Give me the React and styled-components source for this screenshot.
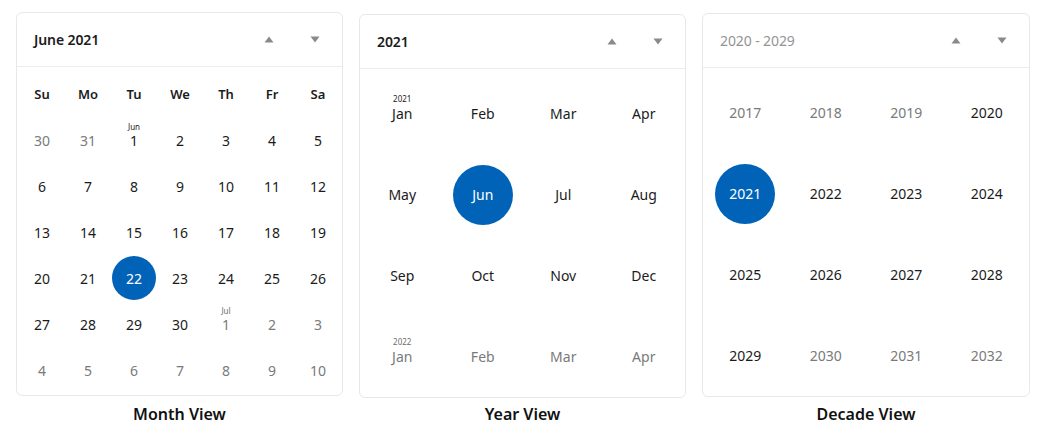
import React from "react";
import styled, { createGlobalStyle } from "styled-components";

const Global = createGlobalStyle`
  html, body { margin: 0; padding: 0; background: #ffffff; }
  body { font-family: "Noto Sans", "Open Sans", sans-serif; color: #1b1b1b; }
`;

const Page = styled.div`
  display: flex;
  gap: 16px;
  padding: 12px 16px 0 16px;
  align-items: flex-start;
`;

const Column = styled.div`
  display: flex;
  flex-direction: column;
  align-items: center;
  width: ${(p) => p.$w}px;
`;

const Card = styled.div`
  box-sizing: border-box;
  width: 100%;
  height: 384px;
  margin-top: ${(p) => p.$top || 0}px;
  border: 1px solid #e8e8e8;
  border-radius: 6px;
  background: #fff;
  display: flex;
  flex-direction: column;
  overflow: hidden;
`;

const Header = styled.div`
  height: 53px;
  flex: none;
  display: flex;
  align-items: center;
  padding: 0 4px 0 17px;
  border-bottom: 1px solid #ececec;
`;

const Title = styled.div`
  flex: 1;
  font-size: 14px;
  font-weight: ${(p) => (p.$muted ? 400 : 600)};
  color: ${(p) => (p.$muted ? "#949494" : "#1b1b1b")};
  letter-spacing: -0.1px;
`;

const NavButton = styled.div`
  width: 46px;
  height: 40px;
  display: flex;
  align-items: center;
  justify-content: center;
`;

const Caption = styled.div`
  margin-top: ${(p) => p.$gap}px;
  font-size: 16px;
  font-weight: 600;
  color: #111;
  letter-spacing: 0px;
  line-height: 22px;
`;

const DayGrid = styled.div`
  display: grid;
  grid-template-columns: repeat(7, 46px);
  grid-auto-rows: 46px;
  padding: 4px 2px 0 2px;
`;

const WeekDay = styled.div`
  display: flex;
  align-items: center;
  justify-content: center;
  font-size: 13px;
  font-weight: 600;
  color: #1b1b1b;
`;

const Cell = styled.div`
  position: relative;
  display: flex;
  align-items: center;
  justify-content: center;
`;

const Bubble = styled.div`
  width: ${(p) => p.$size}px;
  height: ${(p) => p.$size}px;
  border-radius: 50%;
  display: flex;
  align-items: center;
  justify-content: center;
  font-size: 14px;
  background: ${(p) => (p.$selected ? "#0063b8" : "transparent")};
  color: ${(p) => (p.$selected ? "#ffffff" : p.$out ? "#7a7a7a" : "#1b1b1b")};
`;

const Tag = styled.div`
  position: absolute;
  left: 0;
  right: 0;
  top: ${(p) => p.$top}px;
  text-align: center;
  font-size: 8px;
  line-height: 10px;
  color: ${(p) => (p.$out ? "#6e6e6e" : "#1b1b1b")};
`;

const BigGrid = styled.div`
  display: grid;
  grid-template-columns: repeat(4, 80.5px);
  grid-auto-rows: 81px;
  padding: 4px 2px 0 2px;
`;

const Arrow = ({ down }) => (
  <svg width="10" height="7" viewBox="0 0 10 7">
    <polygon points={down ? "0.5,0.5 9.5,0.5 5,6.5" : "0.5,6.5 9.5,6.5 5,0.5"} fill="#8a8a8a" />
  </svg>
);

const Nav = () => (
  <>
    <NavButton>
      <Arrow />
    </NavButton>
    <NavButton>
      <Arrow down />
    </NavButton>
  </>
);

const weekDays = ["Su", "Mo", "Tu", "We", "Th", "Fr", "Sa"];

const buildDays = () => {
  const days = [];
  [30, 31].forEach((d) => days.push({ d, out: true }));
  for (let d = 1; d <= 30; d++) days.push({ d, out: false, tag: d === 1 ? "Jun" : null, sel: d === 22 });
  for (let d = 1; d <= 10; d++) days.push({ d, out: true, tag: d === 1 ? "Jul" : null });
  return days;
};

const months = ["Jan", "Feb", "Mar", "Apr", "May", "Jun", "Jul", "Aug", "Sep", "Oct", "Nov", "Dec"];

const MonthView = () => (
  <Column $w={327}>
    <Card $top={0}>
      <Header>
        <Title>June 2021</Title>
        <Nav />
      </Header>
      <DayGrid>
        {weekDays.map((w) => (
          <WeekDay key={w}>{w}</WeekDay>
        ))}
        {buildDays().map((c, i) => (
          <Cell key={i}>
            {c.tag && <Tag $top={5} $out={c.out}>{c.tag}</Tag>}
            <Bubble $size={44} $selected={c.sel} $out={c.out}>
              {c.d}
            </Bubble>
          </Cell>
        ))}
      </DayGrid>
    </Card>
    <Caption $gap={7}>Month View</Caption>
  </Column>
);

const YearView = () => {
  const items = [
    ...months.map((m, i) => ({ t: m, out: false, tag: i === 0 ? "2021" : null, sel: m === "Jun" })),
    ...months.slice(0, 4).map((m, i) => ({ t: m, out: true, tag: i === 0 ? "2022" : null })),
  ];
  return (
    <Column $w={327}>
      <Card $top={2}>
        <Header>
          <Title>2021</Title>
          <Nav />
        </Header>
        <BigGrid>
          {items.map((c, i) => (
            <Cell key={i}>
              {c.tag && <Tag $top={21} $out={c.out}>{c.tag}</Tag>}
              <Bubble $size={60} $selected={c.sel} $out={c.out}>
                {c.t}
              </Bubble>
            </Cell>
          ))}
        </BigGrid>
      </Card>
      <Caption $gap={5}>Year View</Caption>
    </Column>
  );
};

const DecadeView = () => {
  const items = [];
  for (let y = 2017; y <= 2032; y++) items.push({ t: y, out: y < 2020 || y > 2029, sel: y === 2021 });
  return (
    <Column $w={328}>
      <Card $top={1}>
        <Header>
          <Title $muted>2020 - 2029</Title>
          <Nav />
        </Header>
        <BigGrid>
          {items.map((c, i) => (
            <Cell key={i}>
              <Bubble $size={60} $selected={c.sel} $out={c.out}>
                {c.t}
              </Bubble>
            </Cell>
          ))}
        </BigGrid>
      </Card>
      <Caption $gap={6}>Decade View</Caption>
    </Column>
  );
};

export default function App() {
  return (
    <>
      <Global />
      <Page>
        <MonthView />
        <YearView />
        <DecadeView />
      </Page>
    </>
  );
}
